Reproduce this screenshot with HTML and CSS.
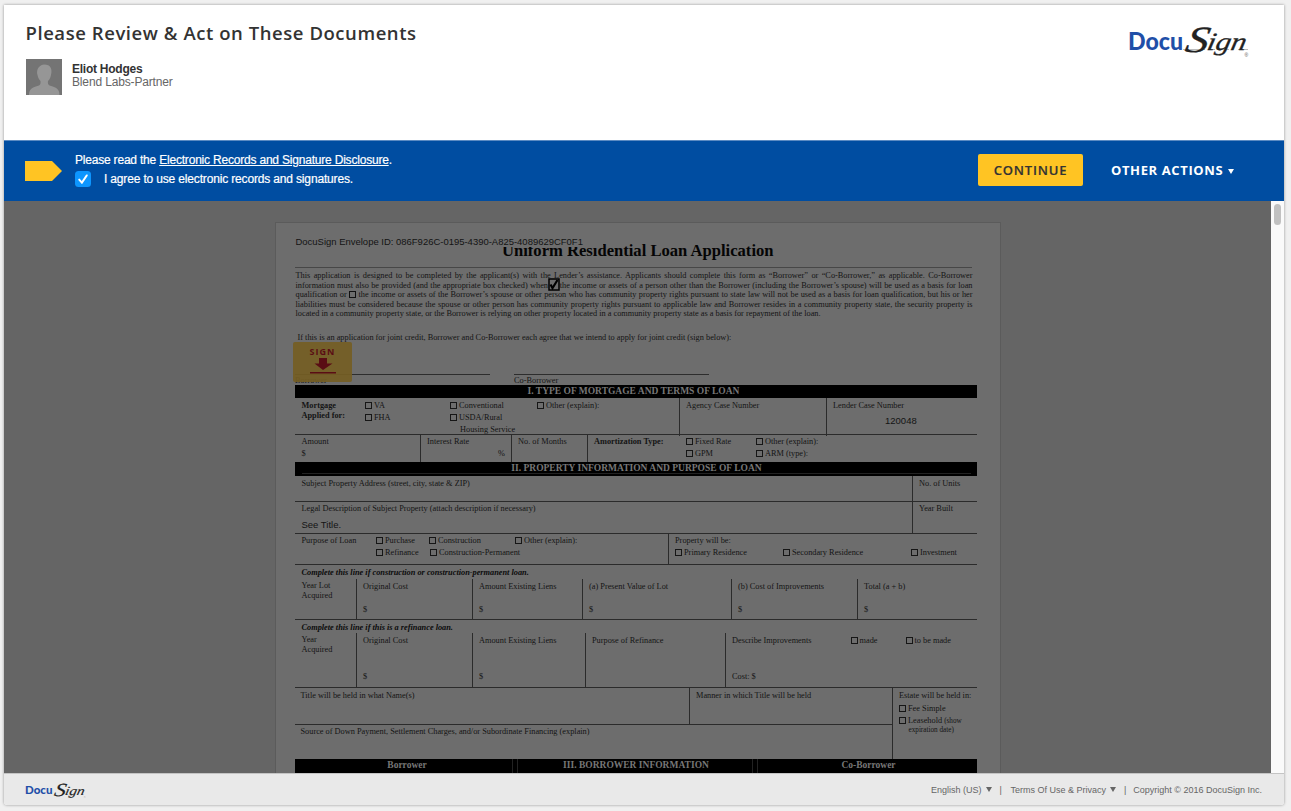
FILE: index.html
```html
<!DOCTYPE html>
<html lang="en">
<head>
<meta charset="utf-8">
<title>Please Review &amp; Act on These Documents</title>
<link rel="stylesheet" href="styles.css">
</head>
<body>
<div class="window">
  <header class="header">
    <div>
      <h1 class="title">Please Review &amp; Act on These Documents</h1>
      <div class="sender">
        <svg class="avatar" viewBox="0 0 36 36"><rect width="36" height="36" fill="#747474"/><path d="M3 36c0-6 3-7.500 10-9.500 1.500-.5 1.800-2.500 1.500-4.500-2-2-2.500-4-3-6-1-3-.5-9.500 6.500-10.500 7 0 8.500 5 7 10.500-.4 2-1 4-3 6-.3 2 0 4 1.500 4.500 7 2 10 3.500 10 9.500z" fill="#969696"/></svg>
        <div class="who"><b>Eliot Hodges</b><span>Blend Labs-Partner</span></div>
      </div>
    </div>
    <svg class="logo" viewBox="0 0 122 40">
      <path d="M56 25.500h22m5 0h5m10 0h4m9 0h10" stroke="#aaa" stroke-width=".8"/>
      <text class="docu" x="1" y="25.500" textLength="55" lengthAdjust="spacingAndGlyphs">Docu</text>
      <text class="script" transform="translate(57 28) skewX(-12)" font-size="37" textLength="23" lengthAdjust="spacingAndGlyphs">S</text>
      <text class="script" transform="translate(79 26) skewX(-12)" font-size="25" textLength="39" lengthAdjust="spacingAndGlyphs">ign</text>
      <text class="reg" x="117.500" y="32.500">®</text>
    </svg>
  </header>
  <div class="bar">
    <svg class="tag" viewBox="0 0 37 20"><path d="M0 0h27l10 10-10 10H0z" fill="#ffc423"/></svg>
    <div class="consent">
      <p>Please read the <a>Electronic Records and Signature Disclosure</a>.</p>
      <label class="agree"><svg viewBox="0 0 16 16"><rect width="16" height="16" rx="3.500" fill="#0d96ff"/><path d="M4.200 8.600l2.700 3 4.900-7.200" fill="none" stroke="#fff" stroke-width="1.900" stroke-linecap="round"/></svg><span>I agree to use electronic records and signatures.</span></label>
    </div>
    <button class="continue">CONTINUE</button>
    <div class="other"><span>OTHER ACTIONS</span><i class="tri"></i></div>
  </div>
  <main class="viewer">
    <div class="stage">
      <article class="page">
        <div class="envelope">DocuSign Envelope ID: 086F926C-0195-4390-A825-4089629CF0F1</div>
        <h2 class="doc-title">Uniform Residential Loan Application</h2>
        <div class="intro">
          <p>This application is designed to be completed by the applicant(s) with the Lender’s assistance. Applicants should complete this form as “Borrower” or “Co-Borrower,” as applicable. Co-Borrower</p>
          <p>information must also be provided (and the appropriate box checked) when <span class="ticked"><svg viewBox="0 0 12 13"><rect x="1" y="1" width="10" height="11" fill="none" stroke="#000" stroke-width="1.500"/><path d="M2.500 6.500l2 3.500 5-8" fill="none" stroke="#000" stroke-width="2.200"/></svg></span> the income or assets of a person other than the Borrower (including the Borrower’s spouse) will be used as a basis for loan</p>
          <p>qualification or <i class="box"></i> the income or assets of the Borrower’s spouse or other person who has community property rights pursuant to state law will not be used as a basis for loan qualification, but his or her</p>
          <p>liabilities must be considered because the spouse or other person has community property rights pursuant to applicable law and Borrower resides in a community property state, the security property is</p>
          <p class="last">located in a community property state, or the Borrower is relying on other property located in a community property state as a basis for repayment of the loan.</p>
        </div>
        <p class="joint">If this is an application for joint credit, Borrower and Co-Borrower each agree that we intend to apply for joint credit (sign below):</p>
        <div class="signatures">
          <div>Borrower</div><div>Co-Borrower</div>
          <div class="sign"><b>SIGN</b><svg viewBox="0 0 26 16"><path d="M9 0h8v5.500h5.500L13 12 4.500 5.500H9zM0 14h26v1.500H0z" fill="#5a0d14"/></svg></div>
        </div>
        <div class="section one">I. TYPE OF MORTGAGE AND TERMS OF LOAN</div>
        <div class="row mortgage">
          <div class="cell opts-m">
            <b class="tight">Mortgage<br>Applied for:</b>
            <div><p class="opt">VA</p><p class="opt">FHA</p></div>
            <div><p class="opt">Conventional</p><p class="opt">USDA/Rural</p><p class="indent">Housing Service</p></div>
            <div><p class="opt">Other (explain):</p></div>
          </div>
          <div class="cell">Agency Case Number</div>
          <div class="cell">Lender Case Number<p class="typed case">120048</p></div>
        </div>
        <div class="row amount">
          <div class="cell">Amount<br>$</div>
          <div class="cell">Interest Rate<p class="pct">%</p></div>
          <div class="cell">No. of Months</div>
          <div class="cell opts-a">
            <b>Amortization Type:</b>
            <div><p class="opt">Fixed Rate</p><p class="opt">GPM</p></div>
            <div><p class="opt">Other (explain):</p><p class="opt">ARM (type):</p></div>
          </div>
        </div>
        <div class="section two"><span>II. PROPERTY INFORMATION AND PURPOSE OF LOAN</span></div>
        <div class="row address"><div class="cell">Subject Property Address (street, city, state &amp; ZIP)</div><div class="cell">No. of Units</div></div>
        <div class="row legal"><div class="cell">Legal Description of Subject Property (attach description if necessary)<p class="typed">See Title.</p></div><div class="cell">Year Built</div></div>
        <div class="row purpose">
          <div class="cell opts-p">
            <span>Purpose of Loan</span>
            <div><p class="opt">Purchase</p><p class="opt">Refinance</p></div>
            <div><p class="opt">Construction</p><p class="opt shift">Construction-Permanent</p></div>
            <div><p class="opt">Other (explain):</p></div>
          </div>
          <div class="cell">Property will be:
            <div class="opts-r"><p class="opt">Primary Residence</p><p class="opt">Secondary Residence</p><p class="opt">Investment</p></div>
          </div>
        </div>
        <p class="note">Complete this line if construction or construction-permanent loan.</p>
        <div class="row construct">
          <div class="cell tight">Year Lot<br>Acquired</div>
          <div class="cell split"><span>Original Cost</span><span>$</span></div>
          <div class="cell split"><span>Amount Existing Liens</span><span>$</span></div>
          <div class="cell split"><span>(a) Present Value of Lot</span><span>$</span></div>
          <div class="cell split"><span>(b) Cost of Improvements</span><span>$</span></div>
          <div class="cell split"><span>Total (a + b)</span><span>$</span></div>
        </div>
        <p class="note low">Complete this line if this is a refinance loan.</p>
        <div class="row refinance">
          <div class="cell tight">Year<br>Acquired</div>
          <div class="cell split"><span>Original Cost</span><span>$</span></div>
          <div class="cell split"><span>Amount Existing Liens</span><span>$</span></div>
          <div class="cell">Purpose of Refinance</div>
          <div class="cell split"><div class="opts-i"><span>Describe Improvements</span><p class="opt">made</p><p class="opt">to be made</p></div><span>Cost: $</span></div>
        </div>
        <div class="holding">
          <div class="cell held">Title will be held in what Name(s)</div>
          <div class="cell manner">Manner in which Title will be held</div>
          <div class="cell estate">Estate will be held in:<p class="opt">Fee Simple</p><p class="opt">Leasehold&nbsp;<small>(show</small></p><small class="exp">expiration date)</small></div>
          <div class="cell source">Source of Down Payment, Settlement Charges, and/or Subordinate Financing (explain)</div>
        </div>
        <div class="section three"><span class="first">Borrower</span><i></i><span>III. BORROWER INFORMATION</span><i></i><span>Co-Borrower</span></div>
      </article>
    </div>
    <div class="scroll"><i></i></div>
  </main>
  <footer class="footer">
    <svg class="logo small" viewBox="0 0 122 40">
      <text class="docu" x="0" y="28" textLength="55" lengthAdjust="spacingAndGlyphs">Docu</text>
      <text class="script" transform="translate(57 31) skewX(-12)" font-size="37" textLength="23" lengthAdjust="spacingAndGlyphs">S</text>
      <text class="script" transform="translate(79 29) skewX(-12)" font-size="25" textLength="39" lengthAdjust="spacingAndGlyphs">ign</text>
      <text class="reg" x="117.500" y="35">®</text>
    </svg>
    <div class="links"><span>English (US)</span><i class="tri"></i><em>|</em><span>Terms Of Use &amp; Privacy</span><i class="tri"></i><em class="near">|</em><span>Copyright © 2016 DocuSign Inc.</span></div>
  </footer>
</div>
</body>
</html>
```
FILE: styles.css
```css
*, *::before { box-sizing: border-box; margin: 0; padding: 0; }
body { width: 1291px; height: 811px; overflow: hidden; background: #f0f0f0; padding: 5px 7px 6px 4px; font-family: "Liberation Sans", Arial, sans-serif; }
.window { width: 1280px; height: 800px; display: flex; flex-direction: column; background: #fff; box-shadow: 0 0 3px rgba(0,0,0,.4); border-radius: 0 0 3px 3px; overflow: hidden; }

.header { height: 135px; padding: 17px 35px 0 21.500px; display: flex; justify-content: space-between; }
.title { font: 600 18.500px/22px "Open Sans", "Noto Sans", sans-serif; letter-spacing: .56px; color: #333; white-space: nowrap; }
.sender { display: flex; margin-top: 15px; }
.avatar { width: 36px; height: 36px; margin-right: 10.500px; }
.who { display: flex; flex-direction: column; font-size: 12px; line-height: 13px; padding-top: 4px; color: #666; letter-spacing: -.15px; }
.who b { color: #333; letter-spacing: -.25px; }
.logo { width: 122px; height: 40px; margin-top: 2px; overflow: visible; }
.docu { font: 900 24px Lato, sans-serif; fill: #1f4fa8; }
.script { font-family: "Liberation Serif", serif; font-style: italic; fill: #222; stroke: #222; stroke-width: .3px; }
.reg { font: 5px "Liberation Sans", sans-serif; fill: #555; }

.bar { height: 61px; background: #004da1; border-top: 1px solid #5c8bc2; display: flex; align-items: center; color: #fff; padding: 0 0 1px 21.400px; flex: none; }
.tag { width: 37px; height: 20px; margin-right: 12.600px; }
.consent { width: 903px; font-size: 12px; letter-spacing: -.2px; -webkit-text-stroke: .2px #fff; margin-top: -2px; }
.consent p { line-height: 16px; }
.consent a { text-decoration: underline; }
.agree { display: flex; align-items: center; margin-top: 3px; line-height: 16px; letter-spacing: -.16px; }
.agree svg { width: 16px; height: 16px; margin-right: 13px; }
.continue { width: 105px; height: 32px; border: 0; border-radius: 2px; background: #ffc423; color: #333; font: 600 13px "Open Sans", sans-serif; letter-spacing: .8px; -webkit-text-stroke: .2px #333; margin-top: -1px; }
.other { display: flex; align-items: center; margin: -1px 0 0 28px; font: 700 13px "Open Sans", sans-serif; letter-spacing: .62px; white-space: nowrap; }
.tri { border: 3px solid transparent; border-top: 5px solid currentColor; border-bottom: 0; }
.other .tri { margin-left: 5px; margin-top: 2px; }

.viewer { height: 572px; display: flex; overflow: hidden; flex: none; }
.stage { width: 1266.500px; background: #656565; padding: 21px 0 0 271px; overflow: hidden; }
.scroll { width: 13.500px; background: #fafafa; padding: 3px 3px 0 3.500px; }
.scroll i { display: block; height: 21px; width: 7px; border-radius: 4px; background: #c1c1c1; }

.page { width: 726px; height: 600px; background: #6d6d6d; border: 1px solid #5b5b5b; padding: 12px 23px 0 19px; color: #141414; font: 8.300px/12px "Liberation Serif", "Times New Roman", serif; white-space: nowrap; }
.envelope { position: relative; z-index: 1; width: 308px; height: 12px; background: #6d6d6d; font: 9.470px/13px "Liberation Sans", sans-serif; padding-left: .5px; }
.doc-title { font-size: 16.600px; line-height: 20px; margin-top: -6px; height: 27px; padding-left: 207px; border-bottom: 1px solid #474747; width: 677px; color: #050505; }
.intro { width: 677px; margin: 3px 0 0 .500px; line-height: 9.600px; }
.intro p { height: 9.600px; text-align: justify; text-align-last: justify; white-space: normal; }
.intro p.last { text-align-last: left; white-space: nowrap; }
.box { display: inline-block; width: 7px; height: 7px; border: 1px solid #111; vertical-align: -1px; }
.ticked { display: inline-block; position: relative; width: 7px; height: 4px; }
.ticked svg { position: absolute; left: -2px; top: -6px; width: 12px; height: 13px; }
.joint { margin: 13px 0 0 2.500px; height: 12px; }
.signatures { position: relative; height: 41px; padding-top: 30px; display: flex; gap: 24px; }
.signatures > div:not(.sign) { width: 195px; border-top: 1px solid #2d2d2d; line-height: 11px; }
.signatures .sign { position: absolute; left: -2px; top: -2px; width: 59px; height: 40px; border-radius: 2px; background: rgba(116,94,35,.93); color: #5a0d14; text-align: center; }
.sign b { display: block; font: 700 9px/12px "Open Sans", sans-serif; letter-spacing: 1px; padding-top: 4px; }
.sign svg { width: 26px; height: 16px; display: block; margin: 0 auto; }

.section { width: 682px; height: 13px; background: #000; color: #777; font-weight: bold; font-size: 9.500px; line-height: 12px; text-align: center; }
.section.one { padding-right: 5px; }
.section.two { height: 14px; padding: 0 6px 0 7px; }
.section.two span { display: block; height: 12px; border-bottom: 1px solid #222; }
.row { display: grid; width: 682px; border-bottom: 1px solid #2b2b2b; }
.cell { border-left: 1px solid #2b2b2b; padding-left: 6px; min-width: 0; }
.cell:first-child { border-left-color: transparent; padding-left: 5.500px; }
.tight { line-height: 10px; }
.opt { display: flex; align-items: center; }
.opt::before { content: ""; flex: none; width: 7px; height: 7px; border: 1px solid #161616; margin-right: 2px; }
.typed { font-family: "Liberation Sans", sans-serif; font-size: 9.500px; }

.mortgage { height: 37px; grid-template-columns: 384px 147px 151px; }
.mortgage .cell { padding-top: 2px; }
.opts-m { display: grid; grid-template-columns: 63.500px 85px 87px auto; }
.opts-m .tight { padding-top: 1px; }
.indent { padding-left: 10px; }
.case { padding: 3px 0 0 52px; }
.amount { height: 27px; border: 0; grid-template-columns: 125px 91px 76px 390px; }
.amount .cell { padding-top: 1px; }
.pct { padding-left: 71px; }
.opts-a { display: grid; grid-template-columns: 92px 70px auto; }
.address { height: 26px; grid-template-columns: 617px 65px; }
.address .cell { padding-top: 2px; }
.legal { height: 32px; grid-template-columns: 617px 65px; }
.legal .cell { padding-top: 1.500px; }
.legal .typed { padding-top: 4px; }
.purpose { height: 31px; grid-template-columns: 373px 309px; }
.purpose .cell { padding-top: 1px; }
.opts-p { display: grid; grid-template-columns: 74.500px 53px 86px auto; }
.shift { margin-left: 1px; }
.opts-r { display: grid; grid-template-columns: 108px 128px auto; }
.note { font-weight: bold; font-style: italic; padding-left: 6.500px; height: 14px; line-height: 15px; color: #0b0b0b; }
.note.low { height: 13px; }
.construct { height: 41px; grid-template-columns: 61px 116px 110px 149px 126px 120px; }
.refinance { height: 55px; grid-template-columns: 61px 116px 113px 140px 252px; }
.construct .tight, .refinance .tight { padding-top: 2.500px; }
.split { display: flex; flex-direction: column; justify-content: space-between; padding-top: 2px; padding-bottom: 3px; }
.refinance .cell:not(.tight) { padding-top: 2px; }
.refinance .split { padding-bottom: 4px; }
.opts-i { display: grid; grid-template-columns: 118.500px 55px auto; }
.holding { display: grid; width: 682px; height: 71px; grid-template: 37px 34px / 394px 203px 85px; }
.holding .cell { padding-top: 2px; }
.held, .manner { border-bottom: 1px solid #2b2b2b; }
.held, .source { border-left: 0; }
.holding .source { padding-top: 1.500px; padding-left: 5.500px; }
.estate { grid-row: 1 / 3; grid-column: 3; }
.source { grid-column: 1 / 3; }
.estate small { font-size: 7.200px; }
.estate .opt { position: relative; top: 1px; }
.exp { display: block; line-height: 7px; padding: 1px 0 0 9.500px; }
.three { display: grid; height: 15px; line-height: 13px; font-size: 9.500px; grid-template-columns: 217px 6px 234px 6px 219px; }
.three i { border: 1px solid #222; border-width: 0 1px; }
.three .first { padding-left: 7px; }
.three .first ~ span { padding-left: 2px; }

.footer { flex: 1; background: #e9e9e9; border-top: 1px solid #c4c4c4; display: flex; align-items: center; justify-content: space-between; padding: 0 22px 0 21px; font-size: 9px; color: #666; }
.logo.small { width: 61px; height: 20px; margin-top: 0; }
.links { display: flex; align-items: center; }
.links .tri { margin-left: 4px; }
.links em { font-style: normal; margin: 0 8.500px 0 8px; }
.links em.near { margin-right: 7px; }
```
